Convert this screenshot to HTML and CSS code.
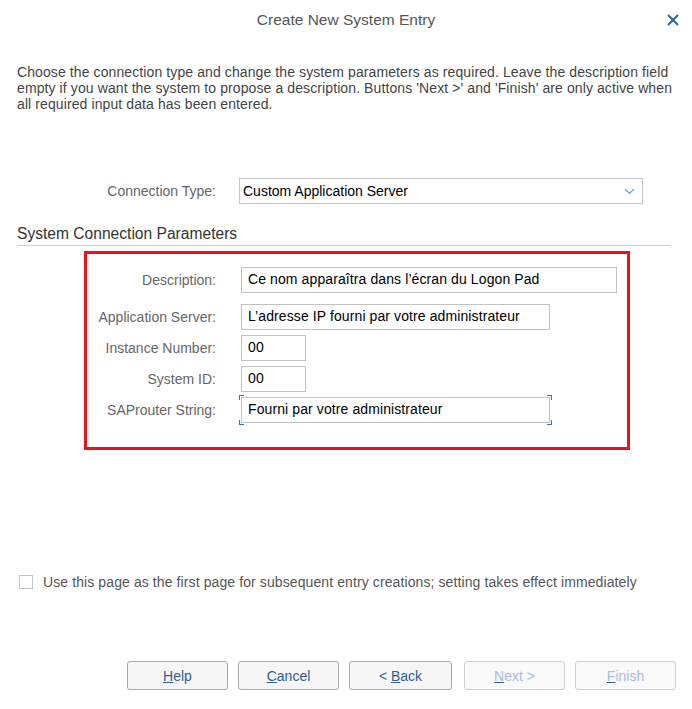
FILE: index.html
```html
<!DOCTYPE html>
<html lang="en">
<head>
    <meta charset="UTF-8">
    <title>Create New System Entry</title>
    <link rel="stylesheet" href="styles.css">
</head>
<body>
    <div class="dialog">
        <div class="header">
            <span class="caption">Create New System Entry</span>
            <svg class="close" width="12" height="12" viewBox="0 0 12 12">
                <path d="M1 1 L11 11 M11 1 L1 11" stroke="#2a68a6" stroke-width="2" fill="none"/>
            </svg>
        </div>
        <p class="intro">Choose the connection type and change the system parameters as required. Leave the description field empty if you want the system to propose a description. Buttons 'Next &gt;' and 'Finish' are only active when all required input data has been entered.</p>

        <div class="type-row">
            <label class="type-label">Connection Type:</label>
            <div class="select">
                <span>Custom Application Server</span>
                <svg width="11" height="7" viewBox="0 0 11 7">
                    <path d="M1 1 L5.5 5.5 L10 1" stroke="#6f9fd3" stroke-width="1.2" fill="none"/>
                </svg>
            </div>
        </div>

        <h2 class="section">System Connection Parameters</h2>

        <div class="params">
            <div class="row first">
                <label>Description:</label>
                <div class="field wide">Ce nom apparaîtra dans l’écran du Logon Pad</div>
            </div>
            <div class="row">
                <label>Application Server:</label>
                <div class="field mid">L’adresse IP fourni par votre administrateur</div>
            </div>
            <div class="row">
                <label>Instance Number:</label>
                <div class="field short">00</div>
            </div>
            <div class="row">
                <label>System ID:</label>
                <div class="field short">00</div>
            </div>
            <div class="row">
                <label>SAProuter String:</label>
                <div class="focus">
                    <div class="field mid">Fourni par votre administrateur</div>
                </div>
            </div>
        </div>

        <div class="check-row">
            <span class="box"></span>
            <span>Use this page as the first page for subsequent entry creations; setting takes effect immediately</span>
        </div>

        <div class="buttons">
            <button><u>H</u>elp</button>
            <button><u>C</u>ancel</button>
            <button class="back">&lt; <u>B</u>ack</button>
            <button class="off"><u>N</u>ext &gt;</button>
            <button class="off"><u>F</u>inish</button>
        </div>
    </div>
</body>
</html>
```

FILE: styles.css
```css
body {
    margin: 0;
    background: #fff;
    font-family: "Liberation Sans", Arial, sans-serif;
    font-size: 14px;
    color: #333;
}
.dialog {
    width: 692px;
    height: 709px;
    display: flex;
    flex-direction: column;
}
.header {
    height: 40px;
    display: flex;
    align-items: center;
    justify-content: center;
    position: relative;
}
.caption {
    font-size: 15.5px;
    color: #555;
}
.close {
    position: absolute;
    right: 13px;
    top: 14px;
}
.intro {
    margin: 24px 17px 0 17px;
    line-height: 16px;
    color: #444;
    font-size: 14px;
    letter-spacing: 0.1px;
}
.type-row {
    display: flex;
    align-items: center;
    margin-top: 66px;
}
.type-label {
    width: 216px;
    text-align: right;
    color: #666;
    margin-right: 23px;
}
.select {
    height: 24px;
    border: 1px solid #c6c6c6;
    display: flex;
    align-items: center;
    justify-content: space-between;
    padding: 0 7px 0 3px;
    color: #000;
    box-sizing: content-box;
    width: 392px;
}
.section {
    font-size: 15.6px;
    font-weight: normal;
    color: #333;
    margin: 20px 21px 0 17px;
    line-height: 20px;
    padding-bottom: 1px;
    border-bottom: 1px solid #cfcfcf;
}
.params {
    margin: 5px 0 0 84px;
    width: 540px;
    border: 3px solid #e8141c;
    padding: 13px 0 24px 0;
}
.row {
    display: flex;
    align-items: center;
    margin-top: 5px;
}
.row.first {
    margin-top: 0;
    margin-bottom: 11px;
}
.row label {
    width: 129px;
    text-align: right;
    color: #666;
    margin-right: 25px;
}
.field {
    height: 26px;
    line-height: 22px;
    border: 1px solid #c2c2c2;
    padding: 0 6px;
    color: #000;
    box-sizing: border-box;
    letter-spacing: 0.1px;
}
.wide {
    width: 376px;
}
.mid {
    width: 309px;
}
.short {
    width: 65px;
}
.focus {
    margin: -2px 0 -2px -2px;
    padding: 2px;
    background:
        linear-gradient(#3a74ae, #3a74ae) left top / 5px 1px no-repeat,
        linear-gradient(#3a74ae, #3a74ae) left top / 1px 5px no-repeat,
        linear-gradient(#3a74ae, #3a74ae) right top / 5px 1px no-repeat,
        linear-gradient(#3a74ae, #3a74ae) right top / 1px 5px no-repeat,
        linear-gradient(#3a74ae, #3a74ae) left bottom / 5px 1px no-repeat,
        linear-gradient(#3a74ae, #3a74ae) left bottom / 1px 5px no-repeat,
        linear-gradient(#3a74ae, #3a74ae) right bottom / 5px 1px no-repeat,
        linear-gradient(#3a74ae, #3a74ae) right bottom / 1px 5px no-repeat;
}
.check-row {
    display: flex;
    align-items: center;
    margin: 124px 0 0 19px;
    color: #555;
    letter-spacing: 0.1px;
}
.box {
    width: 12px;
    height: 12px;
    border: 1px solid #c4c4c4;
    margin-right: 10px;
}
.buttons {
    display: flex;
    justify-content: flex-end;
    gap: 10px;
    margin-top: auto;
    margin-bottom: 19px;
    padding-right: 16px;
}
button {
    width: 101px;
    height: 29px;
    background: #f6f6f6;
    border: 1px solid #a9a9a9;
    border-radius: 3px;
    font-family: "Liberation Sans", Arial, sans-serif;
    font-size: 14px;
    color: #2f5f8e;
}
button.back {
    width: 103px;
    margin-right: 2px;
}
button u {
    text-decoration-color: #2f5f8e;
}
button.off {
    color: #a6bfd8;
    border-color: #cfcfcf;
    background: #f9f9f9;
}
```
